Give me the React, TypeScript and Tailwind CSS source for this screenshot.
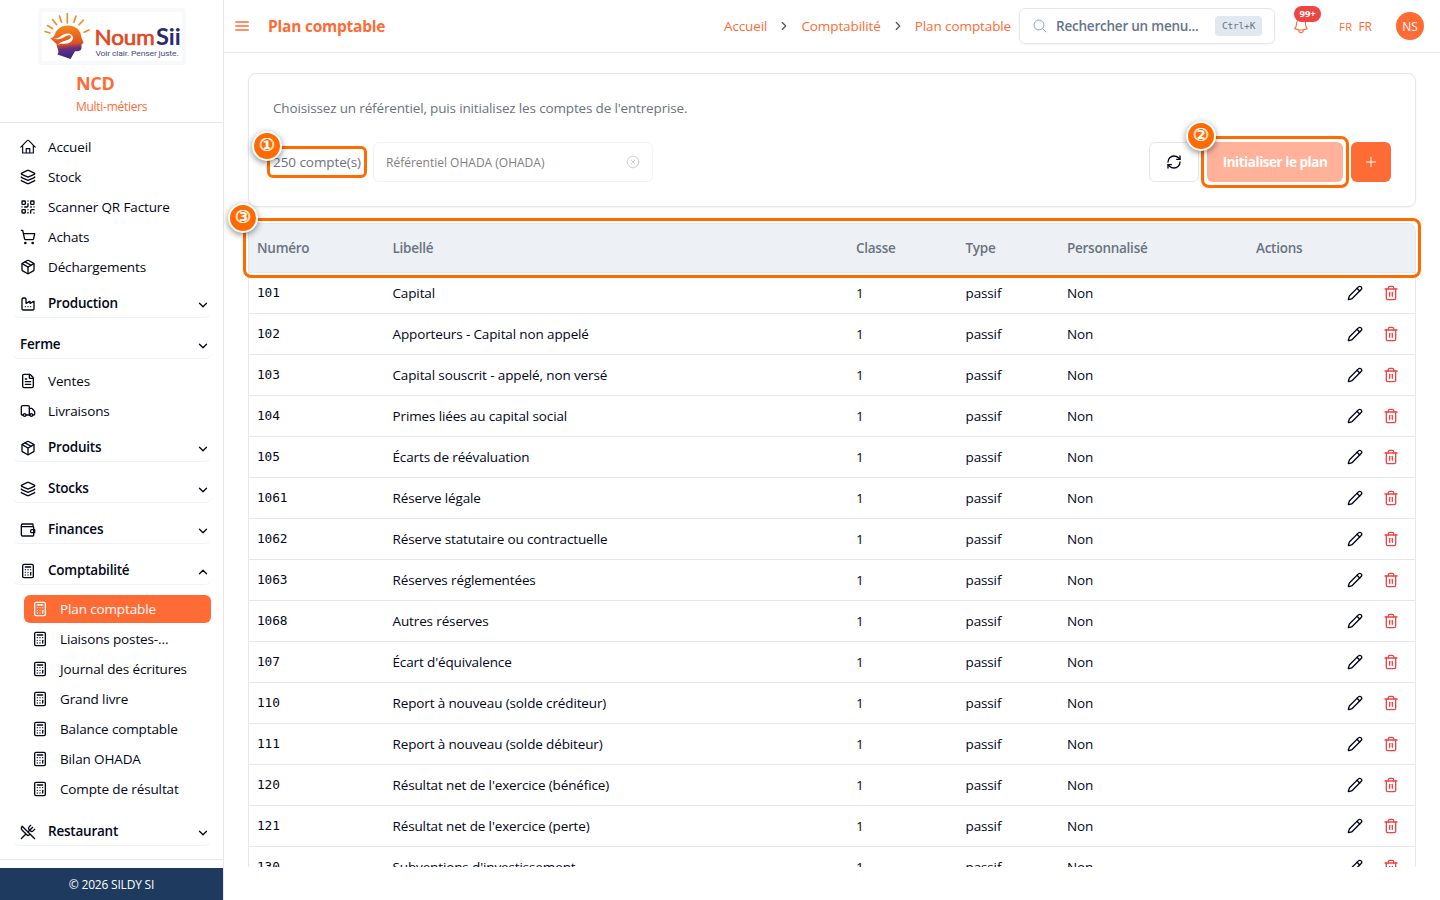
import React from "react";
import {
  Calculator, ChevronDown, ChevronRight, ChevronUp, CircleX, Factory, FileText, Layers,
  Package, Pencil, Plus, QrCode, RefreshCw, ShoppingCart, Trash2, Truck, UtensilsCrossed,
} from "lucide-react";
import { HiOutlineBars3, HiOutlineBell, HiOutlineMagnifyingGlass } from "react-icons/hi2";

type Icon = React.ComponentType<{ className?: string; strokeWidth?: number | string }>;

function HomeIcon({ className }: { className?: string }) {
  return (
    <svg viewBox="0 0 24 24" fill="none" stroke="currentColor" strokeWidth="1.700" strokeLinecap="round" strokeLinejoin="round" className={className}>
      <path d="M1.200 12.200L11.200 2.200a1.100 1.100 0 0 1 1.600 0L22.800 12.200M4 9.700V21h16V9.700M9.300 21v-6.500h5.400V21" />
    </svg>
  );
}

function WalletIcon({ className }: { className?: string }) {
  return (
    <svg viewBox="0 0 24 24" fill="none" stroke="currentColor" strokeWidth="2" strokeLinecap="round" strokeLinejoin="round" className={className}>
      <path d="M19.500 7V4a1 1 0 0 0-1-1H4a2 2 0 0 0-2 2v14a2 2 0 0 0 2 2h15.500a1 1 0 0 0 1-1V8a1 1 0 0 0-1-1H3M22 11.500h-4a2.250 2.250 0 0 0 0 4.500h4z" />
    </svg>
  );
}

const topLinks: [Icon, string][] = [
  [HomeIcon, "Accueil"],
  [Layers, "Stock"],
  [QrCode, "Scanner QR Facture"],
  [ShoppingCart, "Achats"],
  [Package, "Déchargements"],
];

const accountingLinks = [
  "Plan comptable", "Liaisons postes-...", "Journal des écritures", "Grand livre",
  "Balance comptable", "Bilan OHADA", "Compte de résultat",
];

const accounts = [
  ["101", "Capital"],
  ["102", "Apporteurs - Capital non appelé"],
  ["103", "Capital souscrit - appelé, non versé"],
  ["104", "Primes liées au capital social"],
  ["105", "Écarts de réévaluation"],
  ["1061", "Réserve légale"],
  ["1062", "Réserve statutaire ou contractuelle"],
  ["1063", "Réserves réglementées"],
  ["1068", "Autres réserves"],
  ["107", "Écart d'équivalence"],
  ["110", "Report à nouveau (solde créditeur)"],
  ["111", "Report à nouveau (solde débiteur)"],
  ["120", "Résultat net de l'exercice (bénéfice)"],
  ["121", "Résultat net de l'exercice (perte)"],
  ["130", "Subventions d'investissement"],
];

function NavLink({ icon: I, label }: { icon: Icon; label: string }) {
  return (
    <a className="flex h-[30px] items-center gap-3 pl-5">
      <I className="size-4 shrink-0" />
      <span>{label}</span>
    </a>
  );
}

function Section({ icon: I, label, open }: { icon?: Icon; label: string; open?: boolean }) {
  const Chevron = open ? ChevronUp : ChevronDown;
  return (
    <div className="h-[41px] pl-[13px] pr-3 pt-[6px]">
      <button className="flex h-[30px] w-full items-center gap-3 rounded-md border-b border-[#eff2f7] pl-[7px] pr-[1px] pt-[2px] font-semibold tracking-[-0.22px]">
        {I && <I className="size-4 shrink-0" />}
        <span className="flex-1 text-left">{label}</span>
        <Chevron className="mt-[3px] size-[14px]" strokeWidth={2.2} />
      </button>
    </div>
  );
}

function Logo() {
  return (
    <div className="mx-auto flex h-[57px] w-[148px] items-center justify-center rounded bg-[#f8f9fb]">
      <svg viewBox="0 0 140 49" className="h-[49px] w-[140px] bg-white">
        <defs>
          <linearGradient id="head" x1="0.4" y1="0" x2="0.5" y2="1">
            <stop offset="0" stopColor="#f58a1d" />
            <stop offset="0.55" stopColor="#e2521e" />
            <stop offset="0.7" stopColor="#6a2e80" />
            <stop offset="1" stopColor="#2b2a83" />
          </linearGradient>
        </defs>
        <g stroke="#ef8a26" strokeWidth="1.600" strokeLinecap="round">
          <path d="M3 19.500l5 1.400M5.500 13.500l5 3.200M10.500 7.500l4.200 5.200M17.500 4l2 6.300M25.300 1.500v9.500M34 4l-2.200 6.300M41.500 8l-4.400 4.700M47 18l-4.800 2.200" />
        </g>
        <path d="M13 22C15 16.500 20 13.500 26 13.500C34 13.500 39 18.500 39.300 25L41.500 30.500C41.500 31.700 39.800 31.500 39.500 32.500V36C39.500 38.500 37 39.300 33 39.300L28.500 47L15.500 42.500C18 38.500 14.500 36 14.500 32L8 26C11 26 12 24.500 13 22Z" fill="url(#head)" />
        <path d="M11 26.500C19 27 20 20.500 27 21.500C33 23.500 31.500 29 27 31C23 32.500 19 30.500 15 33.500C20 27.500 27 29.500 29 25.200C29 23 26.500 23 24 24C20 26.500 17 28.500 11 26.500Z" fill="#fff" />
        <text x="52.500" y="33" fontSize="22" fontWeight="400" fontFamily="Lato, sans-serif" fill="#e0481f" stroke="#e0481f" strokeWidth=".7" textLength="60" lengthAdjust="spacingAndGlyphs">Noum</text>
        <text x="114" y="33" fontSize="23" fontWeight="700" fontFamily="Lato, sans-serif" fill="#2b2a6b" textLength="24.500" lengthAdjust="spacingAndGlyphs">Sii</text>
        <text x="53.500" y="44" fontSize="7" fontFamily="Roboto, sans-serif" fill="#4a4980" textLength="83" lengthAdjust="spacingAndGlyphs">Voir clair. Penser juste.</text>
      </svg>
    </div>
  );
}

function Sidebar() {
  return (
    <aside className="flex w-[224px] shrink-0 flex-col border-r border-[#e5e7eb] tracking-[-0.13px]">
      <div className="h-[123px] border-b border-[#e5e7eb] pt-2">
        <Logo />
        <div className="pl-[76px] text-[#ff6b35]">
          <div className="mt-[6px] text-[18px] font-bold leading-6 tracking-[-0.3px]">NCD</div>
          <div className="mt-[3px] text-[12px] leading-[18px] tracking-[-0.28px]">Multi-métiers</div>
        </div>
      </div>
      <nav className="flex-1 pt-[9px]">
        {topLinks.map(([icon, label]) => <NavLink key={label} icon={icon} label={label} />)}
        <Section icon={Factory} label="Production" />
        <Section label="Ferme" />
        <div className="pt-[2px]">
          <NavLink icon={FileText} label="Ventes" />
          <NavLink icon={Truck} label="Livraisons" />
        </div>
        <Section icon={Package} label="Produits" />
        <Section icon={Layers} label="Stocks" />
        <Section icon={WalletIcon} label="Finances" />
        <Section icon={Calculator} label="Comptabilité" open />
        <div className="mb-[7px] mt-[5px] flex flex-col gap-[2px] pl-6 pr-3">
          {accountingLinks.map((label, i) => (
            <a key={label} className={i === 0 ? "flex h-7 items-center gap-3 rounded-md bg-[#ff6b35] pl-2 text-white" : "flex h-7 items-center gap-3 pl-2"}>
              <Calculator className="size-4" />
              {label}
            </a>
          ))}
        </div>
        <Section icon={UtensilsCrossed} label="Restaurant" />
      </nav>
      <div className="border-t border-[#e5e7eb] pt-2">
        <div className="flex h-8 items-center justify-center bg-[#1e3a5f] pt-[2px] text-[12px] tracking-[-0.2px] text-white">© 2026 SILDY SI</div>
      </div>
    </aside>
  );
}

function Header() {
  return (
    <header className="flex h-[53px] shrink-0 items-center border-b border-[#e5e7eb] pl-[9px] pr-4 text-[#ff6b35]">
      <HiOutlineBars3 className="size-[18px] stroke-2" />
      <h1 className="ml-[17px] flex-1 pt-[2px] text-[15.500px] font-bold tracking-[-0.23px]">Plan comptable</h1>
      <nav className="flex items-center tracking-[-0.1px]">
        <span>Accueil</span>
        <ChevronRight className="mx-[10px] size-[14px] text-[#4b5563]" />
        <span>Comptabilité</span>
        <ChevronRight className="mx-[10px] size-[14px] text-[#4b5563]" />
        <span>Plan comptable</span>
      </nav>
      <div className="ml-2 flex h-9 w-[256px] items-center rounded-md border border-[#e5e7eb] pl-3 pr-3 text-[#64748b] shadow-xs">
        <HiOutlineMagnifyingGlass className="size-4 text-[#94a3b8]" />
        <span className="ml-2 flex-1 whitespace-nowrap text-[13.500px] font-semibold tracking-[-0.23px]">Rechercher un menu...</span>
        <kbd className="flex h-5 w-[47px] items-center justify-center rounded bg-[#e2e8f0] font-['DejaVu_Sans_Mono',monospace] text-[9.500px] tracking-[-0.2px]">Ctrl+K</kbd>
      </div>
      <div className="relative ml-[17px]">
        <HiOutlineBell className="size-[18px]" />
        <span className="absolute -top-[11px] left-[2px] flex h-4 w-[27px] items-center justify-center rounded-full bg-[#ef4444] pt-px text-[9.500px] font-bold text-white">99+</span>
      </div>
      <div className="ml-[29px] flex items-baseline gap-[6px] pt-[2px]">
        <span className="text-[11px] tracking-[0.4px]">FR</span>
        <span className="text-[12px]">FR</span>
      </div>
      <div className="ml-6 flex size-7 items-center justify-center rounded-full bg-[#ff6b35] pt-px text-[12px] text-white">NS</div>
    </header>
  );
}

function Marker({ children, className }: { children: string; className: string }) {
  return (
    <span className={`absolute z-20 flex size-[30px] items-center justify-center rounded-full border-2 border-white bg-[#ff6b00] pb-[2px] pr-px font-['DejaVu_Sans',sans-serif] text-[18px] font-normal leading-none tracking-normal text-white shadow-[0_2px_6px_rgba(0,0,0,0.45)] [text-shadow:1px_0_#fff] ${className}`}>
      {children}
    </span>
  );
}

function Toolbar() {
  return (
    <section className="h-[134px] rounded-lg border border-[#e5e7eb] px-6 pt-[23px] shadow-xs">
      <p className="leading-[22px] tracking-[-0.155px] text-[#6b7280]">Choisissez un référentiel, puis initialisez les comptes de l'entreprise.</p>
      <div className="mt-[23px] flex h-10 items-center">
        <div className="relative w-[100px] whitespace-nowrap tracking-[-0.06px] text-[#6b7280]">
          250 compte(s)
          <span className="absolute -left-[6px] -top-[6px] h-[32px] w-[100px] rounded-md border-3 border-[#ff6b00]" />
          <Marker className="-left-[21px] -top-[21px]">①</Marker>
        </div>
        <div className="flex h-10 w-[280px] items-center justify-between rounded-md border border-[#f2f3f5] px-3 text-[12px] text-[#808080]">
          <span className="pt-px">Référentiel OHADA (OHADA)</span>
          <CircleX className="size-[14px] text-[#c9cbd0]" strokeWidth={1.6} />
        </div>
        <div className="flex-1" />
        <button className="flex h-10 w-[50px] items-center justify-center rounded-md border border-[#e5e7eb]">
          <RefreshCw className="size-4" />
        </button>
        <div className="relative ml-2">
          <button className="flex h-10 w-[136px] items-center justify-center rounded-md bg-[#ffb199] pt-px text-[13.500px] font-bold tracking-[-0.46px] text-white">Initialiser le plan</button>
          <span className="absolute -left-[6px] -top-[6px] h-[52px] w-[148px] rounded-lg border-3 border-[#ff6b00]" />
          <Marker className="-left-[21px] -top-[21px]">②</Marker>
        </div>
        <button className="ml-2 flex h-10 w-10 items-center justify-center rounded-md bg-[#ff6b35] text-white">
          <Plus className="size-4" strokeWidth={1.5} />
        </button>
      </div>
    </section>
  );
}

function AccountsTable() {
  return (
    <section className="relative mt-4 h-[644px]">
      <div className="h-full overflow-hidden rounded-t-lg border-x border-t border-[#e5e7eb]">
        <div className="grid h-[49px] grid-cols-[135.500px_463.500px_109.500px_101.500px_189px_1fr] items-center border-b border-[#e5e7eb] bg-[#edf1f6] pl-2 pt-px font-semibold tracking-[-0.26px] text-[#6b7280]">
          {["Numéro", "Libellé", "Classe", "Type", "Personnalisé", "Actions"].map((h) => <span key={h}>{h}</span>)}
        </div>
        {accounts.map(([num, label]) => (
          <div key={num} className="grid h-[41px] grid-cols-[135.500px_463.500px_109.500px_101.500px_1fr_auto] items-center border-b border-[#e5e7eb] pl-2 pr-4 tracking-[-0.13px]">
            <span className="font-['DejaVu_Sans_Mono',monospace] text-[12.800px]">{num}</span>
            <span>{label}</span>
            <span>1</span>
            <span>passif</span>
            <span>Non</span>
            <span className="flex gap-5">
              <Pencil className="size-4" />
              <Trash2 className="size-4 text-[#ef4444]" />
            </span>
          </div>
        ))}
      </div>
      <span className="absolute -left-[5px] -top-[5px] h-[60px] w-[1178px] rounded-lg border-3 border-[#ff6b00]" />
      <Marker className="-left-5 -top-5">③</Marker>
    </section>
  );
}

export default function App() {
  return (
    <div className="flex h-[900px] w-[1440px] overflow-hidden bg-white font-['Open_Sans','Noto_Sans',sans-serif] text-[13.500px] text-[#020617]">
      <Sidebar />
      <div className="flex min-w-0 flex-1 flex-col">
        <Header />
        <main className="px-6 pt-5">
          <Toolbar />
          <AccountsTable />
        </main>
      </div>
    </div>
  );
}
